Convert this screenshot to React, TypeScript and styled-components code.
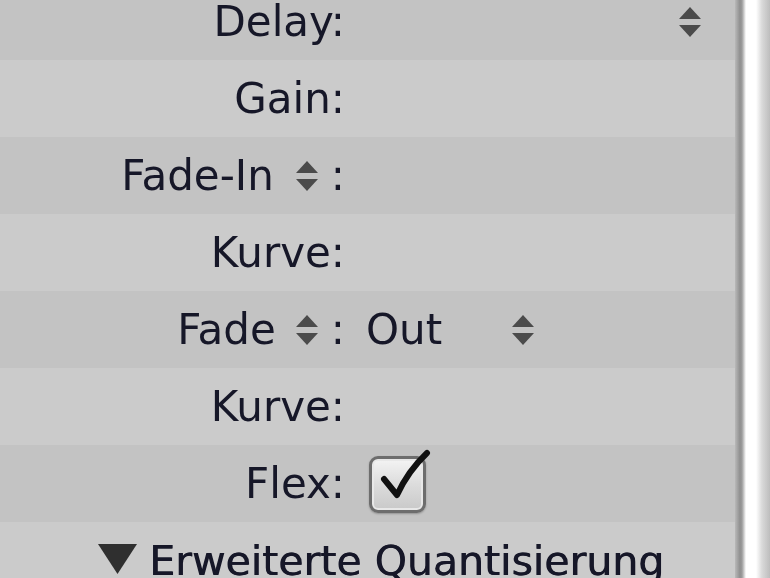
import React from 'react';
import styled, { createGlobalStyle } from 'styled-components';

const GlobalStyle = createGlobalStyle`
    html, body {
        margin: 0;
        padding: 0;
        width: 770px;
        height: 578px;
        overflow: hidden;
        background: #c6c6c6;
    }
`;

const Page = styled.div`
    width: 770px;
    height: 578px;
    display: flex;
    overflow: hidden;
    font-family: 'DejaVu Sans', 'Liberation Sans', sans-serif;
    color: #161728;
    filter: blur(0.6px);
`;

const Panel = styled.div`
    flex: 1;
    display: flex;
    flex-direction: column;
    margin-top: -17px;
`;

const Edge = styled.div`
    width: 35px;
    flex-shrink: 0;
    background: linear-gradient(
        to right,
        #b9b9b9 0px,
        #8f8f8f 5px,
        #9c9c9c 7px,
        #ffffff 11px,
        #ffffff 21px,
        #d9d9d9 27px,
        #bdbdbd 35px
    );
`;

const Row = styled.div<{ $dark?: boolean }>`
    height: 77px;
    flex-shrink: 0;
    display: grid;
    grid-template-columns: 345px 1fr;
    align-items: center;
    background: ${(p) => (p.$dark ? '#c3c3c3' : '#cbcbcb')};
`;

const Label = styled.div`
    display: flex;
    justify-content: flex-end;
    align-items: center;
    font-size: 42px;
    white-space: nowrap;
`;

const Colon = styled.span<{ $gap?: number }>`
    margin-left: ${(p) => p.$gap ?? 0}px;
`;

const Value = styled.div<{ $end?: boolean }>`
    display: flex;
    align-items: center;
    justify-content: ${(p) => (p.$end ? 'flex-end' : 'flex-start')};
    padding-left: 21px;
    padding-right: ${(p) => (p.$end ? 32 : 0)}px;
    font-size: 42px;
`;

const Popup = styled.div`
    width: 170px;
    display: flex;
    align-items: center;
    justify-content: space-between;
`;

const StepperIcon = styled.svg<{ $gap?: number }>`
    width: 26px;
    height: 38px;
    margin-left: ${(p) => p.$gap ?? 0}px;
    flex-shrink: 0;
`;

const Stepper = ({ gap }: { gap?: number }) => (
    <StepperIcon $gap={gap} viewBox="0 0 26 38">
        <path d="M2 16 L13 4 L24 16 Z" fill="#4b4b4b" />
        <path d="M2 22 L13 34 L24 22 Z" fill="#4b4b4b" />
    </StepperIcon>
);

const CheckBox = styled.div`
    position: relative;
    width: 57px;
    height: 57px;
    margin-left: 3px;
    margin-top: 2px;
    box-sizing: border-box;
    border: 3px solid #6d6d6d;
    border-radius: 9px;
    background: linear-gradient(to bottom, #f4f4f4 0%, #dcdcdc 50%, #c9c9c9 100%);
    box-shadow: inset 0 0 0 2px #e8e8e8, 0 1px 2px rgba(0, 0, 0, 0.25);
`;

const CheckMark = styled.svg`
    position: absolute;
    left: 0;
    top: -10px;
    width: 62px;
    height: 62px;
`;

const Section = styled.div`
    height: 77px;
    flex-shrink: 0;
    display: flex;
    align-items: center;
    padding-left: 98px;
    gap: 12px;
    background: #cbcbcb;
    font-size: 41px;
    text-shadow: 0.7px 0 0 #161728;
    white-space: nowrap;
`;

const Disclosure = styled.svg`
    width: 39px;
    height: 32px;
    flex-shrink: 0;
    margin-top: -4px;
`;

const App: React.FC = () => {
    return (
        <>
            <GlobalStyle />
            <Page>
                <Panel>
                    <Row $dark>
                        <Label>Delay:</Label>
                        <Value $end>
                            <Stepper />
                        </Value>
                    </Row>
                    <Row>
                        <Label>Gain:</Label>
                        <Value />
                    </Row>
                    <Row $dark>
                        <Label>
                            Fade-In
                            <Stepper gap={20} />
                            <Colon $gap={11}>:</Colon>
                        </Label>
                        <Value />
                    </Row>
                    <Row>
                        <Label>Kurve:</Label>
                        <Value />
                    </Row>
                    <Row $dark>
                        <Label>
                            Fade
                            <Stepper gap={18} />
                            <Colon $gap={11}>:</Colon>
                        </Label>
                        <Value>
                            <Popup>
                                Out
                                <Stepper />
                            </Popup>
                        </Value>
                    </Row>
                    <Row>
                        <Label>Kurve:</Label>
                        <Value />
                    </Row>
                    <Row $dark>
                        <Label>Flex:</Label>
                        <Value>
                            <CheckBox>
                                <CheckMark viewBox="0 0 62 62">
                                    <path
                                        d="M12 30 L25 46 Q36 22 55 4"
                                        fill="none"
                                        stroke="#111"
                                        strokeWidth="6"
                                        strokeLinecap="round"
                                        strokeLinejoin="round"
                                    />
                                </CheckMark>
                            </CheckBox>
                        </Value>
                    </Row>
                    <Section>
                        <Disclosure viewBox="0 0 39 32">
                            <path d="M0 1 L39 1 L19.5 31 Z" fill="#2f2f2f" />
                        </Disclosure>
                        Erweiterte Quantisierung
                    </Section>
                </Panel>
                <Edge />
            </Page>
        </>
    );
};

export default App;
